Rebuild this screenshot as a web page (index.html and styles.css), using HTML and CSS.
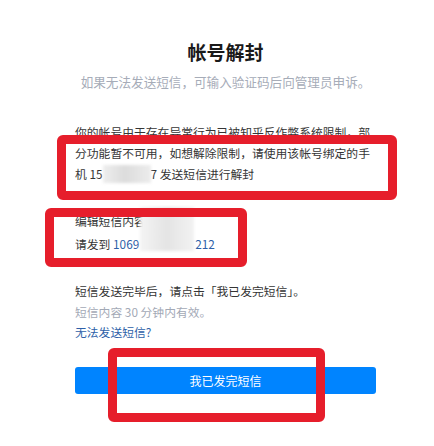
FILE: index.html
```html
<!DOCTYPE html>
<html lang="zh-CN">
<head>
    <meta charset="UTF-8">
    <meta name="viewport" content="width=device-width, initial-scale=1.0">
    <title>帐号解封</title>
    <link rel="stylesheet" href="styles.css">
</head>
<body>
    <div class="unlock">
        <h1 class="unlock-title">帐号解封</h1>
        <p class="unlock-subtitle">如果无法发送短信，可输入验证码后向管理员申诉。</p>

        <p class="unlock-desc">你的帐号由于存在异常行为已被知乎反作弊系统限制，部分功能暂不可用，如想解除限制，请使用该帐号绑定的手机 15<span class="blur blur-inline"></span>7 发送短信进行解封</p>

        <div class="sms-box">
            <p>编辑短信内容：</p>
            <p>请发到 <span class="sms-number">1069<span class="sms-gap"></span>212</span></p>
            <span class="blur blur-sms"></span>
        </div>

        <div class="sms-tips">
            <p>短信发送完毕后，请点击「我已发完短信」。</p>
            <p class="muted">短信内容 30 分钟内有效。</p>
            <a class="link" href="#">无法发送短信?</a>
        </div>

        <button class="btn-primary" type="button">我已发完短信</button>
    </div>

    <!-- annotation boxes -->
    <div class="mark mark-desc"></div>
    <div class="mark mark-sms"></div>
    <div class="mark mark-btn"></div>
</body>
</html>
```

FILE: styles.css
```css
body {
    margin: 0;
    background: #fff;
    font-family: "Noto Sans CJK SC", "Liberation Sans", sans-serif;
    color: #353535;
}

p {
    margin: 0;
}

.unlock {
    width: 301px;
    margin-left: 75px;
    padding-top: 39px;
}

.unlock-title {
    margin: 0;
    font-size: 19px;
    line-height: 26px;
    font-weight: bold;
    text-align: center;
    color: #1a1a1a;
}

.unlock-subtitle {
    margin-top: 7px;
    font-size: 12.6px;
    line-height: 20px;
    text-align: center;
    color: #a6acb8;
    white-space: nowrap;
}

.unlock-desc {
    margin-top: 29px;
    font-size: 11.8px;
    line-height: 21px;
}

.blur {
    display: inline-block;
    background: linear-gradient(90deg, #eeeeee 0%, #dcdcdc 45%, #ececec 100%);
    filter: blur(1.5px);
}

.blur-inline {
    width: 48px;
    height: 18px;
    vertical-align: -4px;
}

.sms-box {
    position: relative;
    margin-top: 25px;
    font-size: 11.8px;
    line-height: 23px;
}

.sms-number {
    color: #2e5fa8;
}

.sms-gap {
    display: inline-block;
    width: 56px;
}

.blur-sms {
    position: absolute;
    left: 65px;
    top: -2px;
    width: 54px;
    height: 44px;
    background: linear-gradient(90deg, #f4f4f4 0%, #e4e4e4 50%, #f2f2f2 100%);
}

.sms-tips {
    margin-top: 26px;
    font-size: 11.8px;
    line-height: 20.5px;
}

.muted {
    color: #a3a9b6;
}

.link {
    color: #2e5fa8;
    text-decoration: none;
}

.btn-primary {
    display: block;
    width: 301px;
    height: 27px;
    margin-top: 24px;
    border: 0;
    border-radius: 3px;
    background: #0084ff;
    color: #fff;
    font-family: inherit;
    font-size: 12px;
}

.mark {
    position: absolute;
    border: 9px solid #e61e2b;
    border-radius: 6px;
}

.mark-desc {
    left: 57px;
    top: 135px;
    width: 322px;
    height: 47px;
}

.mark-sms {
    left: 45px;
    top: 208px;
    width: 184px;
    height: 41px;
}

.mark-btn {
    left: 108px;
    top: 348px;
    width: 199px;
    height: 56px;
}
```
